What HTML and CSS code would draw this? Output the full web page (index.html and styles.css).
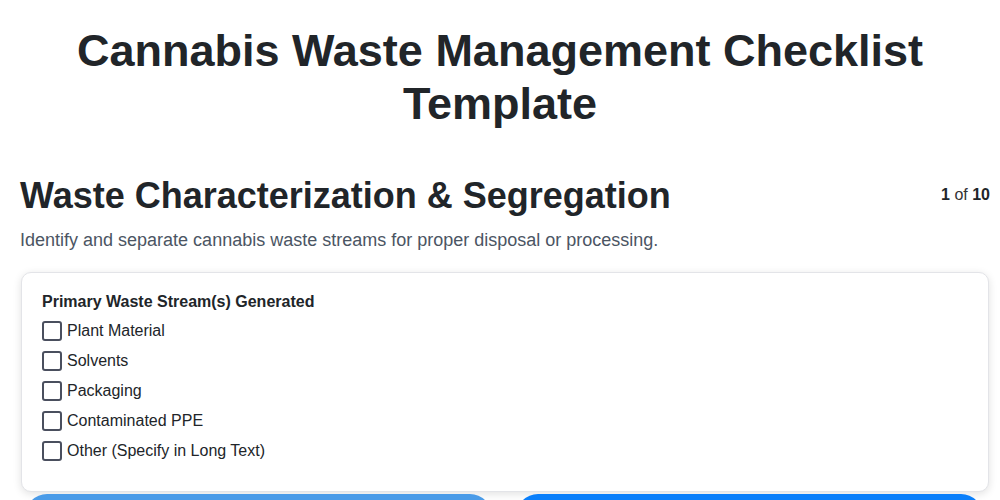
FILE: index.html
```html
<!DOCTYPE html>
<html lang="en">
<head>
    <meta charset="UTF-8">
    <meta name="viewport" content="width=device-width, initial-scale=1.0">
    <title>Cannabis Waste Management Checklist Template</title>
    <link rel="stylesheet" href="styles.css">
</head>
<body>
    <h1 class="page-title">Cannabis Waste Management Checklist Template</h1>

    <div class="wrap">
        <div class="section-head">
            <h2>Waste Characterization &amp; Segregation</h2>
            <div class="counter"><b>1</b> of <b>10</b></div>
        </div>
        <p class="desc">Identify and separate cannabis waste streams for proper disposal or processing.</p>

        <div class="card">
            <div class="field-label">Primary Waste Stream(s) Generated</div>
            <div class="options">
                <label class="option"><input type="checkbox"> Plant Material</label>
                <label class="option"><input type="checkbox"> Solvents</label>
                <label class="option"><input type="checkbox"> Packaging</label>
                <label class="option"><input type="checkbox"> Contaminated PPE</label>
                <label class="option"><input type="checkbox"> Other (Specify in Long Text)</label>
            </div>
        </div>

        <div class="buttons">
            <button class="btn btn-prev">Previous</button>
            <button class="btn btn-next">Next</button>
        </div>
    </div>
</body>
</html>
```

FILE: styles.css
```css
body {
    font-family: "Liberation Sans", Arial, sans-serif;
    margin: 0;
    padding: 0;
    background: #fff;
    color: #212529;
}

.page-title {
    text-align: center;
    font-size: 45px;
    line-height: 53px;
    margin: 24px 40px 0;
    color: #212529;
}

.wrap {
    padding: 0 10px 0 20px;
    margin-top: 44px;
}

.section-head {
    display: flex;
    justify-content: space-between;
    align-items: flex-start;
}

.section-head h2 {
    font-size: 36px;
    line-height: 1.2;
    margin: 0;
}

.counter {
    font-size: 16px;
    margin-top: 12px;
    color: #333;
}

.counter b {
    color: #212529;
}

.desc {
    font-size: 18px;
    color: #4b5563;
    margin: 10px 0 18px;
    line-height: 27px;
}

.card {
    border: 1px solid #e3e4e8;
    border-radius: 10px;
    background: #fff;
    box-shadow: 0 2px 8px rgba(0, 0, 0, 0.12);
    padding: 19px 20px 29px;
    margin-left: 1px;
    margin-right: 1px;
}

.field-label {
    font-weight: bold;
    font-size: 16px;
    line-height: 20px;
    margin-bottom: 8px;
}

.options {
    display: flex;
    flex-direction: column;
    gap: 8px;
}

.option {
    display: flex;
    align-items: center;
    gap: 5px;
    font-size: 16px;
    line-height: 22px;
    color: #212529;
}

.option input {
    appearance: none;
    -webkit-appearance: none;
    width: 20px;
    height: 20px;
    margin: 0;
    border: 2px solid #4a4f5e;
    border-radius: 3px;
    background: #fff;
}

.buttons {
    display: flex;
    gap: 24px;
    margin: 2px 7px 20px 5px;
}

.btn {
    flex: 1;
    height: 64px;
    border: none;
    border-radius: 22px;
    color: #fff;
    font-size: 16px;
    font-weight: bold;
    font-family: inherit;
}

.btn-prev {
    background: #4a9be8;
}

.btn-next {
    background: #0a7ffb;
}
```
